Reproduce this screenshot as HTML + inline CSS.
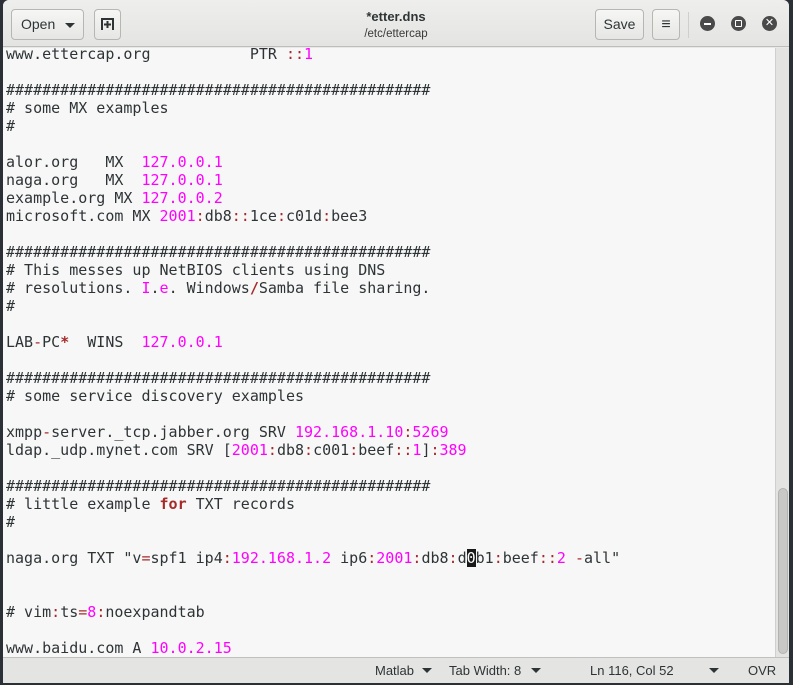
<!DOCTYPE html>
<html><head><style>
*{margin:0;padding:0;box-sizing:border-box}
body{width:793px;height:685px;overflow:hidden;background:#2b3036;position:relative;font-family:"Liberation Sans",sans-serif}
#win{position:absolute;left:3px;top:0;width:786px;height:683px;background:#e8e8e7;border-radius:6px 6px 0 0;overflow:hidden}
#hdr{position:absolute;left:0;top:0;width:786px;height:47px;background:linear-gradient(#eeeeec,#e4e4e2);border-bottom:1px solid #bdbdbb}
.btn{position:absolute;top:9px;height:31px;border:1px solid #b6b6b3;border-radius:4px;background:linear-gradient(#f6f6f5,#e6e6e4);font-size:14px;color:#2e3436;line-height:29px}
#title{position:absolute;left:0;width:786px;text-align:center;top:9px;font-size:13px;font-weight:bold;color:#2e3436}
#sub{position:absolute;left:0;width:786px;text-align:center;top:28px;font-size:11.5px;color:#3a3a3a}
.wc{position:absolute;top:16px;width:15px;height:15px;border-radius:50%;background:#4a4a4a}
#ed{position:absolute;left:0;top:48px;width:772px;height:609px;background:#f7f7f7;overflow:hidden}
#code{position:absolute;left:3px;top:-3px;font-family:"DejaVu Sans Mono","Liberation Mono",monospace;font-size:15px;line-height:18px;color:#2e3436;white-space:pre}
.n{color:#f0f}.r{color:#a52a2a}.k{color:#a52a2a;font-weight:bold}
#sb{position:absolute;left:772px;top:48px;width:14px;height:609px;background:#e3e3e1;border-left:1px solid #cfcfcd}
#thumb{position:absolute;left:2px;top:440px;width:10px;height:166px;background:#c8c8c6;border-radius:5px;border:1px solid #b2b2b0}
#st{position:absolute;left:0;top:657px;width:786px;height:26px;background:#e4e4e2;border-top:1px solid #c0c0be;font-size:13px;color:#2e3436}
#st span{position:absolute;top:5px}
.tri{display:inline-block;width:0;height:0;border-left:5px solid transparent;border-right:5px solid transparent;border-top:5px solid #2e3436;vertical-align:middle;margin-left:6px}
</style></head><body>
<div id="win">
<div id="hdr">
 <div class="btn" style="left:8px;width:73px;padding-left:9px">Open<span class="tri" style="margin-left:10px"></span></div>
 <div class="btn" style="left:91px;width:27px"><svg width="25" height="29" viewBox="0 0 25 29"><path d="M7 20V9h11v11M9 14.5h7M12.5 11v7" fill="none" stroke="#2e3436" stroke-width="2"/></svg></div>
 <div id="title">*etter.dns</div>
 <div id="sub">/etc/ettercap</div>
 <div class="btn" style="left:592px;width:49px;text-align:center">Save</div>
 <div class="btn" style="left:649px;width:28px;text-align:center;font-size:16px;font-weight:bold">≡</div>
 <div style="position:absolute;left:685px;top:12px;width:1px;height:26px;background:#cfcfcd"></div>
 <div class="wc" style="left:697px"><div style="position:absolute;left:4px;top:6.5px;width:7px;height:2px;background:#fff"></div></div>
 <div class="wc" style="left:728px"><div style="position:absolute;left:4px;top:4px;width:7px;height:7px;border:1.5px solid #fff;border-radius:1px"></div></div>
 <div class="wc" style="left:759px;color:#fff;font-size:11px;line-height:15px;text-align:center">✕</div>
</div>
<div id="ed"><div id="code">www.ettercap.org           PTR <span class="r">::</span><span class="n">1</span>

###############################################
# some MX examples
#

alor.org   MX  <span class="n">127.0.0.1</span>
naga.org   MX  <span class="n">127.0.0.1</span>
example.org MX <span class="n">127.0.0.2</span>
microsoft.com MX <span class="n">2001</span><span class="r">:</span>db8<span class="r">::</span>1ce<span class="r">:</span>c01d<span class="r">:</span>bee3

###############################################
# This messes up NetBIOS clients using DNS
# resolutions. <span class="n">I</span>.<span class="n">e</span>. Windows<span class="k">/</span>Samba file sharing.
#

LAB<span class="r">-</span>PC<span class="k">*</span>  WINS  <span class="n">127.0.0.1</span>

###############################################
# some service discovery examples

xmpp<span class="r">-</span>server._tcp.jabber.org SRV <span class="n">192.168.1.10</span><span class="r">:</span><span class="n">5269</span>
ldap._udp.mynet.com SRV [<span class="n">2001</span><span class="r">:</span>db8<span class="r">:</span>c001<span class="r">:</span>beef<span class="r">::</span><span class="n">1</span>]<span class="r">:</span><span class="n">389</span>

###############################################
# little example <span class="k">for</span> TXT records
#

naga.org TXT "v<span class="r">=</span>spf1 ip4<span class="r">:</span><span class="n">192.168.1.2</span> ip6<span class="r">:</span><span class="n">2001</span><span class="r">:</span>db8<span class="r">:</span>d<span style="background:#1a1a1a;color:#fff">0</span>b1<span class="r">:</span>beef<span class="r">::</span><span class="n">2</span> <span class="r">-</span>all"


# vim<span class="r">:</span>ts<span class="r">=</span><span class="n">8</span><span class="r">:</span>noexpandtab

www.baidu.com A <span class="n">10.0.2.15</span></div></div>
<div id="sb"><div id="thumb"></div></div>
<div id="st">
 <span style="left:372px">Matlab<span class="tri" style="margin-left:8px"></span></span>
 <span style="left:446px">Tab Width: 8<span class="tri" style="margin-left:10px"></span></span>
 <span style="left:587px">Ln 116, Col 52</span>
 <span style="left:700px"><span class="tri"></span></span>
 <span style="left:745px">OVR</span>
</div>
</div>
</body></html>
